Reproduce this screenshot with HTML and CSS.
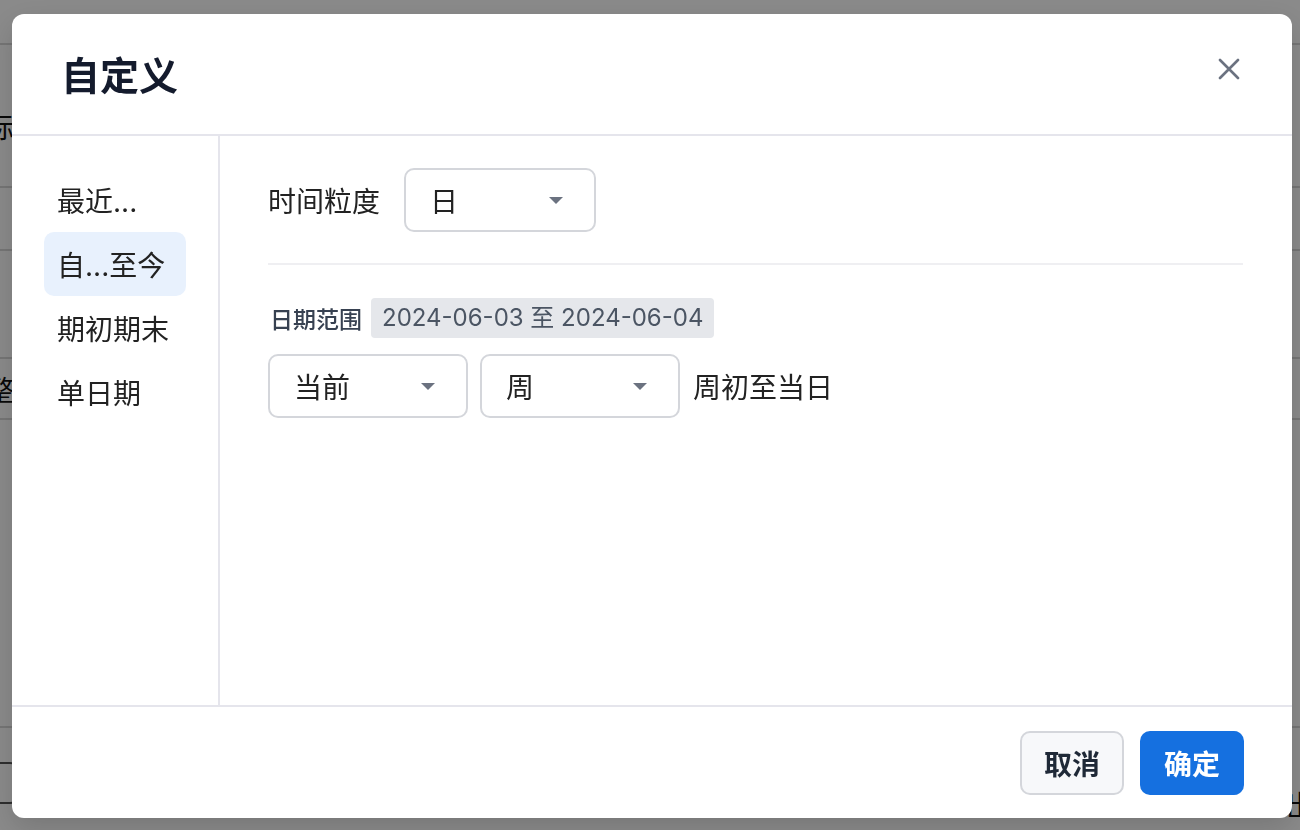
FILE: index.html
```html
<!DOCTYPE html>
<html lang="zh-CN">
<head>
    <meta charset="UTF-8">
    <meta name="viewport" content="width=device-width, initial-scale=1.0">
    <title>自定义</title>
    <link rel="stylesheet" href="styles.css">
</head>
<body>
    <!-- PAGE BEHIND THE DIALOG -->
    <div class="page">
        <div class="page-row row-top"></div>
        <div class="page-row row-a"><span class="cell-text">标</span></div>
        <div class="page-row row-b"></div>
        <div class="page-row row-c"></div>
        <div class="page-row row-d"><span class="cell-text">整</span></div>
        <div class="page-row row-e"></div>
        <div class="page-row row-f">
            <span class="page-btn"></span>
            <span class="cell-text right">出</span>
        </div>
    </div>

    <!-- DIALOG -->
    <div class="overlay">
        <div class="modal">
            <div class="modal-header">
                <h2 class="modal-title">自定义</h2>
                <button class="close-btn" aria-label="关闭">
                    <svg width="22" height="22" viewBox="0 0 22 22">
                        <path d="M2 2 L20 20 M20 2 L2 20" stroke="#6b7280" stroke-width="2.6" stroke-linecap="round" fill="none"/>
                    </svg>
                </button>
            </div>

            <div class="modal-body">
                <ul class="side-menu">
                    <li class="side-item">最近...</li>
                    <li class="side-item active">自...至今</li>
                    <li class="side-item">期初期末</li>
                    <li class="side-item">单日期</li>
                </ul>

                <div class="panel">
                    <div class="field-row">
                        <span class="field-label">时间粒度</span>
                        <div class="select select-sm">
                            <span>日</span>
                            <span class="caret"></span>
                        </div>
                    </div>

                    <div class="divider"></div>

                    <div class="range-row">
                        <span class="range-label">日期范围</span>
                        <span class="range-tag">2024-06-03 至 2024-06-04</span>
                    </div>

                    <div class="field-row">
                        <div class="select">
                            <span>当前</span>
                            <span class="caret"></span>
                        </div>
                        <div class="select">
                            <span>周</span>
                            <span class="caret"></span>
                        </div>
                        <span class="field-note">周初至当日</span>
                    </div>
                </div>
            </div>

            <div class="modal-footer">
                <button class="btn btn-cancel">取消</button>
                <button class="btn btn-ok">确定</button>
            </div>
        </div>
    </div>
</body>
</html>
```

FILE: styles.css
```css
/* GENERAL */
body {
    margin: 0;
    font-family: Inter, "Noto Sans CJK SC", sans-serif;
    background-color: #ffffff;
    color: #1f2937;
    overflow: hidden;
}

/* PAGE BEHIND */
.page {
    height: 830px;
    display: flex;
    flex-direction: column;
}

.page-row {
    border-bottom: 2px solid #d8d8d8;
    display: flex;
    align-items: center;
    justify-content: space-between;
    font-size: 28px;
    color: #111;
}

.row-top { height: 43px; }
.row-a { height: 143px; align-items: flex-end; padding-bottom: 40px; box-sizing: border-box; }
.row-b { height: 61px; }
.row-c { height: 106px; }
.row-d { height: 59px; }
.row-e { height: 306px; }
.row-f { flex: 1; border-bottom: none; align-items: flex-start; padding-top: 34px; }

.cell-text {
    margin-left: -14px;
}

.cell-text.right {
    margin-left: 0;
    margin-right: -14px;
    margin-top: 22px;
}

.page-btn {
    width: 60px;
    height: 38px;
    margin-left: -40px;
    border: 2px solid #555;
    border-radius: 14px;
}

/* OVERLAY */
.overlay {
    position: fixed;
    inset: 0;
    background-color: rgba(0, 0, 0, 0.46);
    padding: 14px 8px 12px 12px;
    box-sizing: border-box;
    display: flex;
}

.modal {
    flex: 1;
    background-color: #ffffff;
    border-radius: 12px;
    display: flex;
    flex-direction: column;
    box-shadow: 0 10px 30px rgba(0, 0, 0, 0.15);
    overflow: hidden;
}

/* HEADER */
.modal-header {
    height: 120px;
    border-bottom: 2px solid #e5e5ec;
    display: flex;
    align-items: center;
    justify-content: space-between;
    padding: 0 52px 0 49px;
    flex-shrink: 0;
}

.modal-title {
    margin: 0;
    font-size: 39px;
    font-weight: 700;
    color: #141b2d;
    line-height: 1;
    margin-top: 2px;
}

.close-btn {
    border: none;
    background: none;
    padding: 0;
    width: 22px;
    height: 22px;
    cursor: pointer;
    margin-bottom: 10px;
}

/* BODY */
.modal-body {
    flex: 1;
    display: flex;
    border-bottom: 2px solid #e5e5ec;
}

.side-menu {
    list-style: none;
    margin: 0;
    padding: 32px 32px 0 32px;
    width: 208px;
    box-sizing: border-box;
    border-right: 2px solid #e5e5ec;
}

.side-item {
    height: 64px;
    width: 142px;
    padding-left: 13px;
    box-sizing: border-box;
    display: flex;
    align-items: center;
    font-size: 28px;
    color: #222;
    border-radius: 10px;
    cursor: pointer;
}

.side-item.active {
    background-color: #e8f1fd;
}

.panel {
    flex: 1;
    padding: 32px 49px 0 48px;
}

.field-row {
    display: flex;
    align-items: center;
    gap: 12px;
}

.field-label {
    font-size: 28px;
    color: #222;
    margin-right: 12px;
}

.field-note {
    font-size: 28px;
    color: #222;
    margin-left: 1px;
}

.select {
    width: 200px;
    height: 64px;
    box-sizing: border-box;
    border: 2px solid #d4d6db;
    border-radius: 10px;
    display: flex;
    align-items: center;
    justify-content: space-between;
    padding: 0 31px 0 24px;
    font-size: 28px;
    color: #222;
}

.select-sm {
    width: 192px;
}

.caret {
    width: 0;
    height: 0;
    border-left: 7px solid transparent;
    border-right: 7px solid transparent;
    border-top: 7px solid #6b7280;
}

.divider {
    height: 2px;
    background-color: #efeff2;
    margin: 31px 0 33px;
}

.range-row {
    display: flex;
    align-items: center;
    gap: 9px;
    margin-bottom: 16px;
    margin-left: 2px;
}

.range-label {
    font-size: 23px;
    font-weight: 500;
    color: #374151;
}

.range-tag {
    background-color: #e5e7eb;
    color: #4b5563;
    font-size: 24px;
    padding: 0 11px;
    height: 40px;
    line-height: 40px;
    border-radius: 4px;
}

/* FOOTER */
.modal-footer {
    height: 111px;
    display: flex;
    align-items: center;
    justify-content: flex-end;
    gap: 16px;
    padding: 0 48px;
    flex-shrink: 0;
}

.btn {
    width: 104px;
    height: 64px;
    border-radius: 10px;
    font-family: Inter, "Noto Sans CJK SC", sans-serif;
    font-size: 28px;
    font-weight: 700;
    cursor: pointer;
}

.btn-cancel {
    background-color: #f7f8fa;
    border: 2px solid #d4d6db;
    color: #1f2937;
}

.btn-ok {
    background-color: #1570e0;
    border: none;
    color: #ffffff;
}
```
